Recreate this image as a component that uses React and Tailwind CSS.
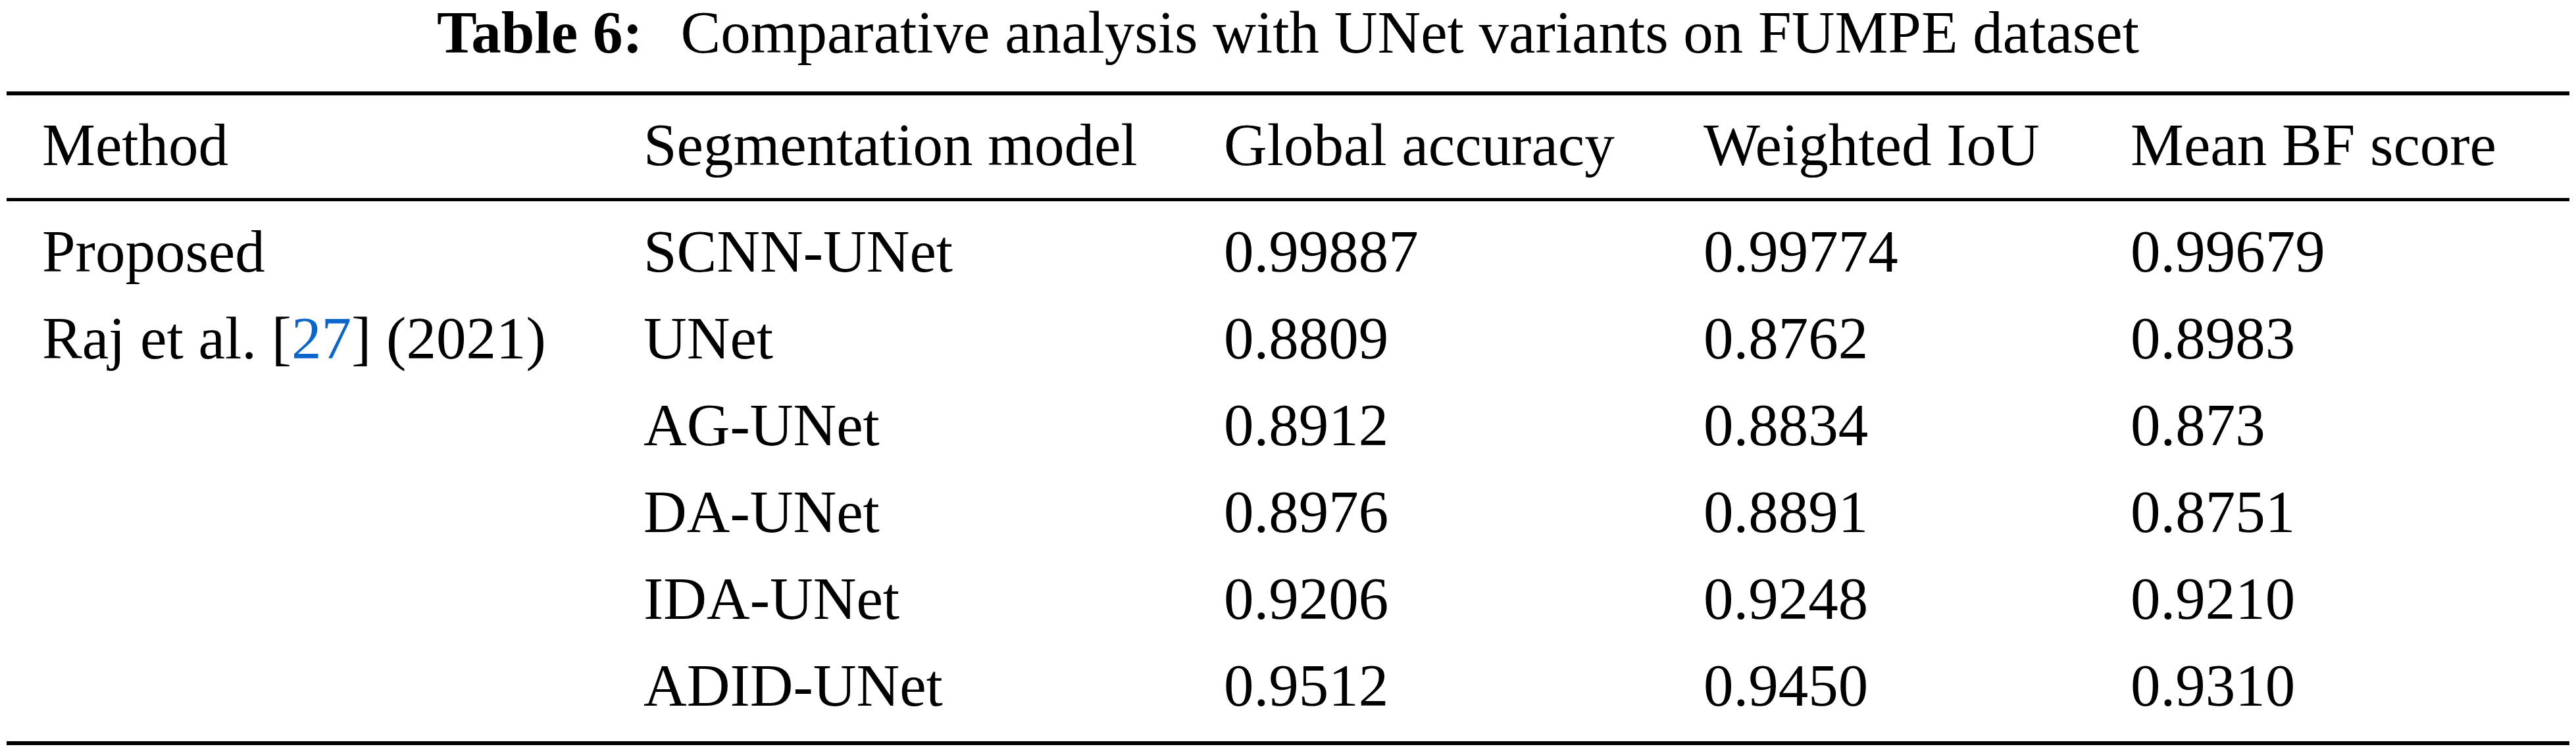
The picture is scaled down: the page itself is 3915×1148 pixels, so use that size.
import React from 'react';

const rows = [
  { method: 'Proposed', model: 'SCNN-UNet', acc: '0.99887', iou: '0.99774', bf: '0.99679' },
  { method: 'raj', model: 'UNet', acc: '0.8809', iou: '0.8762', bf: '0.8983' },
  { method: '', model: 'AG-UNet', acc: '0.8912', iou: '0.8834', bf: '0.873' },
  { method: '', model: 'DA-UNet', acc: '0.8976', iou: '0.8891', bf: '0.8751' },
  { method: '', model: 'IDA-UNet', acc: '0.9206', iou: '0.9248', bf: '0.9210' },
  { method: '', model: 'ADID-UNet', acc: '0.9512', iou: '0.9450', bf: '0.9310' },
];

const grid = 'grid grid-cols-[914px_882px_729px_649px_1fr] pl-[54px]';

export default function App() {
  return (
    <div className="w-[3915px] h-[1148px] bg-white text-black font-['Liberation_Serif','Times_New_Roman',serif] text-[91px] overflow-hidden">
      {/* Caption */}
      <div className="leading-[100px] text-center whitespace-nowrap">
        <span className="font-bold mr-[35px]">Table 6:</span> Comparative analysis with UNet variants on FUMPE dataset
      </div>

      <div className="px-[10px]">
        {/* top rule */}
        <div className="mt-[39px] h-[6px] bg-black" />

        {/* Header */}
        <div className={`${grid} leading-[100px] pt-[26px] whitespace-nowrap`}>
          <div>Method</div>
          <div>Segmentation model</div>
          <div>Global accuracy</div>
          <div>Weighted IoU</div>
          <div>Mean BF score</div>
        </div>

        {/* mid rule */}
        <div className="mt-[30px] h-[5px] bg-black" />

        {/* Body */}
        <div className="pt-[11px]">
          {rows.map((r) => (
            <div key={r.model} className={`${grid} leading-[132px] whitespace-nowrap`}>
              <div>
                {r.method === 'raj' ? (
                  <>
                    Raj et al. [<span className="text-[#0a66cc]">27</span>] (2021)
                  </>
                ) : (
                  r.method
                )}
              </div>
              <div>{r.model}</div>
              <div>{r.acc}</div>
              <div>{r.iou}</div>
              <div>{r.bf}</div>
            </div>
          ))}
        </div>

        {/* bottom rule */}
        <div className="mt-[18px] h-[6px] bg-black" />
      </div>
    </div>
  );
}
